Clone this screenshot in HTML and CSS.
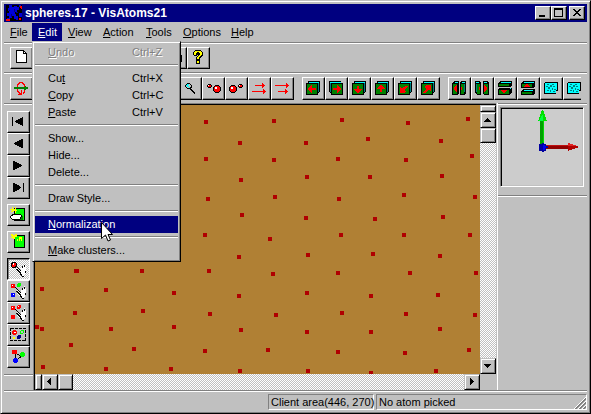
FILE: index.html
```html
<!DOCTYPE html>
<html lang="en">
<head>
<meta charset="utf-8">
<title>spheres.17 - VisAtoms21</title>
<link rel="stylesheet" href="styles.css">
</head>
<body>
<svg class="defs" aria-hidden="true">
  <defs>
    <g id="cube">
      <path d="M2 0h12v11h-1v1h-1V2H2z" fill="#000"/>
      <path d="M3 1h10v1H2z" fill="#0ff"/>
      <path d="M12 2h1v9h-1z" fill="#008080"/>
      <path d="M0 2h12v12H0z" fill="#000"/>
      <path d="M1 3h10v10H1z" fill="#008000"/>
    </g>
    <g id="hand">
      <path d="M7 6l4 4V7h1V5h2V3h1v2h1v6l-2 4h-3l-4-5z" fill="#fff"/>
      <path d="M5 4h1v1h1v1h1v1h1v1h1v1h1v1h-1V9H9V8H8V7H7V6H6V5H5zM6 8h2v1h1v1h1v1h1v2h1v2h-1v-1h-1v-2H9v-1H8v-1H7V9H6zM12 5h1v2h-1zM14 4h1v2h-1zM15 10h1v2h-1zM12 15h2v1h-2z" fill="#000"/>
    </g>
    <g id="bluebox">
      <path d="M2 1h12v9h-2v3H0V2z" fill="#000"/>
      <path d="M1 2h11v10H1zM13 2h-1v7h1z" fill="#0ff"/>
      <path d="M3 3h2v1H3zM8 3h2v1H8zM6 4h2v2H6zM2 5h2v1H2zM9 5h2v1H9zM4 6h2v2H4zM8 7h1v2H8zM10 8h2v1h-2zM3 9h2v1H3zM6 9h1v2H6zM9 10h2v1H9z" fill="#008080"/>
    </g>
  </defs>
</svg>
<div class="window">
  <header class="titlebar">
    <svg class="app-icon" width="16" height="16" aria-hidden="true">
      <path d="M0 0h16v16H0z" fill="#000"/>
      <path d="M3 0h3v2h2V1h3v1h2v3h-2v2H9v2h1v2h2v3H8v-3H6v2H3v-2H1V8h2V6H2V3h1zM13 0h2v2h-2zM13 8h3v4h-3zM1 13h3v2H1zM10 13h2v2h-2z" fill="#0000d8"/>
      <path d="M3 5h1v1H3zM8 4h1v3H8zM5 9h1v3H5zM10 7h2v1h-2z" fill="#000080"/>
      <path d="M14 1h2v3h-1V3h-1zM0 14h4v2H0zM13 13h2v2h-2z" fill="#f00"/>
    </svg>
    <h1>spheres.17 - VisAtoms21</h1>
    <div class="title-buttons">
      <button type="button" class="raised" aria-label="Minimize"><svg width="14" height="12"><path d="M3 8h6v2H3z"/></svg></button>
      <button type="button" class="raised" aria-label="Maximize"><svg width="14" height="12"><path d="M2 1h9v9H2zM3 3v6h7V3z" fill-rule="evenodd"/></svg></button>
      <button type="button" class="raised close" aria-label="Close"><svg width="14" height="12"><path d="M3 2h2v1h1v1h2V3h1V2h2v1h-1v1H9v1H8v1h1v1h1v1h1v1H9V8H8V7H6v1H5v1H3V8h1V7h1V6h1V5H5V4H4V3H3z"/></svg></button>
    </div>
  </header>

  <nav class="menubar">
    <button type="button"><u>F</u>ile</button>
    <div class="menu-holder">
      <button type="button" class="open" aria-expanded="true"><u>E</u>dit</button>
      <div class="menu" role="menu">
        <button type="button" role="menuitem" disabled><span><u>U</u>ndo</span><span>Ctrl+Z</span></button>
        <hr>
        <button type="button" role="menuitem"><span>Cu<u>t</u></span><span>Ctrl+X</span></button>
        <button type="button" role="menuitem"><span><u>C</u>opy</span><span>Ctrl+C</span></button>
        <button type="button" role="menuitem"><span><u>P</u>aste</span><span>Ctrl+V</span></button>
        <hr>
        <button type="button" role="menuitem">Show...</button>
        <button type="button" role="menuitem">Hide...</button>
        <button type="button" role="menuitem">Delete...</button>
        <hr>
        <button type="button" role="menuitem">Draw Style...</button>
        <hr>
        <button type="button" role="menuitem" class="selected"><span><u>N</u>ormalization</span>
          <svg class="cursor" width="12" height="20" aria-hidden="true"><path d="M.5 .5v16l4-3.500l2.500 6l2.500-1l-2.500-5.500h4.500z" fill="#fff" stroke="#000"/></svg>
        </button>
        <hr>
        <button type="button" role="menuitem"><span><u>M</u>ake clusters...</span></button>
      </div>
    </div>
    <button type="button"><u>V</u>iew</button>
    <button type="button"><u>A</u>ction</button>
    <button type="button"><u>T</u>ools</button>
    <button type="button"><u>O</u>ptions</button>
    <button type="button"><u>H</u>elp</button>
  </nav>

  <div class="toolbar rule file-tools">
    <div class="group">
      <button type="button" class="tool" aria-label="New"><svg width="16" height="16"><path d="M3 1h8v1h1v1h1v1h1v10H3z"/><path d="M4 2h6v3h3v8H4zM11 3h1v1h-1z" fill="#fff"/></svg></button>
      <button type="button" class="tool" aria-label="Open"></button>
      <button type="button" class="tool" aria-label="Save"></button>
    </div>
    <div class="group">
      <button type="button" class="tool" aria-label="Cut"></button>
      <button type="button" class="tool" aria-label="Copy"></button>
      <button type="button" class="tool" aria-label="Paste"></button>
    </div>
    <div class="group">
      <button type="button" class="tool" aria-label="Print"><svg width="16" height="16"><path d="M2 6h11V5h1v1h1v7h-1v1H2z"/><path d="M4 8h8v3H4zM13 7h1v1h-1zM13 10h1v1h-1z" fill="#c0c0c0"/></svg></button>
      <button type="button" class="tool" aria-label="Help"><svg width="16" height="16"><path d="M5 1h6v1h1v1h1v4h-1v1h-1v1h-1v2H6V8h1V7h1V6H7v1H4V6H3V3h1V2h1zM6 11h4v4H6z"/><path d="M5 2h6v1h1v3h-1v1h-1v1H9v2H7V8h1V7h1V6h1V4H9V3H7v1H6v2H4V3h1zM7 12h2v2H7z" fill="#ff0"/></svg></button>
    </div>
  </div>

  <div class="toolbar rule view-tools">
    <div class="group">
      <button type="button" class="tool" aria-label="Rotate"><svg width="16" height="16"><path d="M0 6h10V4h1v1h1v1h2v2h-2v1h-1v1h-1V8H0z" fill="#008000"/><path d="M5 1h4v1h1v1h1v3h-1V4H9V3H8V2H6v1H5v1H4v2H3V3h1V2h1zM3 8h1v2h1v1h1v1h1V9h1v5H4v-1h1v-1H4v-1H3zM10 9h1v3h-1v1H9v-2h1z" fill="#f00"/></svg></button>
      <button type="button" class="tool" aria-label="Rotate vertical"></button>
      <button type="button" class="tool" aria-label="Spin"></button>
      <button type="button" class="tool" aria-label="Move"></button>
      <button type="button" class="tool" aria-label="Move up"></button>
      <button type="button" class="tool" aria-label="Move down"></button>
      <button type="button" class="tool" aria-label="Fit"></button>
    </div>
    <div class="group">
      <button type="button" class="tool" aria-label="Zoom"><svg width="16" height="16"><path d="M4 2h3v1h1v1h1v3H8v1h1v1h1v1h1v1h1v2h-1v-1h-1v-1H9v-1H8V9H7V8H4V7H3V6H2V4h1V3h1zM4 3v1H3v2h1v1h3V6h1V4H7V3z"/><path d="M4 3h2v1H5v1h1v1H4V5H3V4h1zM6 6h1v1H6z" fill="#0ff"/></svg></button>
      <button type="button" class="tool" aria-label="Bring closer"><svg width="16" height="16"><path d="M2 3h3v1h1v2H5v1H2V6H1V4h1zM9 4h4v1h1v1h1v4h-1v1h-1v1H9v-1H8v-1H7V6h1V5h1z"/><path d="M2 4h3v2H2zM9 5h4v1h1v4h-1v1H9v-1H8V6h1z" fill="#f00"/><path d="M2 4h1v1H2zM9 6h2v2H9z" fill="#fff"/></svg></button>
      <button type="button" class="tool" aria-label="Push away"><svg width="16" height="16"><path d="M10 3h3v1h1v2h-1v1h-3V6H9V4h1zM2 4h4v1h1v1h1v4H7v1H6v1H2v-1H1v-1H0V6h1V5h1z"/><path d="M10 4h3v2h-3zM2 5h4v1h1v4H6v1H2v-1H1V6h1z" fill="#f00"/><path d="M10 4h1v1h-1zM2 6h2v2H2z" fill="#fff"/></svg></button>
      <button type="button" class="tool" aria-label="Slower"><svg width="16" height="16"><path d="M3 4h7V2h1v1h1v1h1v1h-1v1h-1v1h-1V5H3zM0 10h11V8h1v1h1v1h1v1h-1v1h-1v1h-1v-2H0z" fill="#f00"/></svg></button>
      <button type="button" class="tool" aria-label="Faster"><svg width="16" height="16"><path d="M0 4h11V2h1v1h1v1h1v1h-1v1h-1v1h-1V5H0zM3 10h7V8h1v1h1v1h1v1h-1v1h-1v1h-1v-2H3z" fill="#f00"/></svg></button>
    </div>
    <div class="group">
      <button type="button" class="tool" aria-label="View left"><svg width="14" height="14"><use href="#cube"/><path d="M2 7h1V6h1V5h1V4h1v3h4v2H6v3H5v-1H4v-1H3V9H2z" fill="#f00"/></svg></button>
      <button type="button" class="tool" aria-label="View right"><svg width="14" height="14"><use href="#cube" transform="matrix(-1 0 0 1 14 0)"/><path d="M12 7h-1V6h-1V5H9V4H8v3H4v2h4v3h1v-1h1v-1h1V9h1z" fill="#f00"/></svg></button>
      <button type="button" class="tool" aria-label="View down"><svg width="14" height="14"><use href="#cube"/><path d="M5 12v-1H4v-1H3V9H2V8h3V5h2v3h3v1H9v1H8v1H7v1z" fill="#f00"/></svg></button>
      <button type="button" class="tool" aria-label="View up"><svg width="14" height="14"><use href="#cube"/><path d="M5 4v1H4v1H3v1H2v1h3v3h2V8h3V7H9V6H8V5H7V4z" fill="#f00"/></svg></button>
      <button type="button" class="tool" aria-label="View front"><svg width="14" height="14"><use href="#cube"/><path d="M2 12V6h1v1h2V6h2V5h3v1H9v1H8v1H7v2h1v1H7v1z" fill="#f00"/></svg></button>
      <button type="button" class="tool" aria-label="View back"><svg width="14" height="14"><use href="#cube"/><path d="M10 4v6H9V9H7v1H6v1H5v1H2v-1h1v-1h1V9h1V7H4V5h1V4z" fill="#f00"/></svg></button>
    </div>
    <div class="group">
      <button type="button" class="tool" aria-label="Cut left"><svg width="14" height="14"><path d="M2 0h5v12l-2 2H0V2zM9 0h5v12l-2 2H8V2z"/><path d="M1 3h4v10H1zM9 3h3v10H9z" fill="#008000"/><path d="M3 1h3v1H3zM10 1h3v1h-3z" fill="#0ff"/><path d="M12 3h1v8h-1z" fill="#008080"/><path d="M5 4v7H4v-1H3V9H2V6h1V5h1V4zM9 6h1v3H9z" fill="#f00"/></svg></button>
      <button type="button" class="tool" aria-label="Cut right"><svg width="14" height="14"><path d="M0 0h5l1 2v12H2l-2-2zM8 0h4l2 2v12H9l-1-2z"/><path d="M2 3h3v10H2zM9 3h4v10H9z" fill="#008000"/><path d="M1 1h3v1H1zM9 1h3v1H9z" fill="#0ff"/><path d="M1 3h1v8H1z" fill="#008080"/><path d="M9 4v7h1v-1h1V9h1V6h-1V5h-1V4zM4 6h1v3H4z" fill="#f00"/></svg></button>
      <button type="button" class="tool" aria-label="Cut bottom"><svg width="14" height="14"><path d="M2 0h12v4l-2 2H0V2zM2 7h12v4l-2 3H0V8z"/><path d="M3 1h10v1H3zM12 7h1v1h-1z" fill="#0ff"/><path d="M1 3h10v2H1zM1 9h10v4H1z" fill="#008000"/><path d="M3 9h6v1H8v1H7v1H5v-1H4v-1H3z" fill="#f00"/></svg></button>
      <button type="button" class="tool" aria-label="Cut top"><svg width="14" height="14"><path d="M2 0h12v5l-2 2H0V2zM2 8h12v4l-2 2H0v-4z"/><path d="M3 1h10v1H3zM3 9h9v1H3z" fill="#0ff"/><path d="M1 3h10v3H1zM1 11h10v2H1z" fill="#008000"/><path d="M5 3h2v1h1v1h1v1H3V5h1V4h1z" fill="#f00"/></svg></button>
      <button type="button" class="tool" aria-label="Fill cell"><svg width="14" height="14"><use href="#bluebox"/></svg></button>
      <button type="button" class="tool" aria-label="Empty cell"><svg width="14" height="14"><use href="#bluebox"/></svg></button>
    </div>
  </div>

  <main class="workspace">
    <aside class="sidebar rule">
      <div class="stack">
        <button type="button" class="tool" aria-label="First frame"><svg width="16" height="16"><path d="M2 3h1v9H2zM5 7h1V6h2V5h2V4h2V3h1v9h-1v-1h-2v-1H8V9H6V8H5z"/></svg></button>
        <button type="button" class="tool" aria-label="Previous frame"><svg width="16" height="16"><path d="M4 7h1V6h2V5h2V4h2V3h2v9h-2v-1H9v-1H7V9H5V8H4z"/></svg></button>
        <button type="button" class="tool" aria-label="Next frame"><svg width="16" height="16"><path d="M12 7h-1V6H9V5H7V4H5V3H3v9h2v-1h2v-1h2V9h2V8h1z"/></svg></button>
        <button type="button" class="tool" aria-label="Last frame"><svg width="16" height="16"><path d="M11 7h-1V6H9V5H7V4H5V3H3v9h2v-1h2v-1h2V9h1V8h1zM13 3h1v9h-1z"/></svg></button>
      </div>
      <div class="stack">
        <button type="button" class="tool" aria-label="Record"><svg width="16" height="16"><path d="M4 1h11v13H4z"/><path d="M5 2h9v11H5z" fill="#0f0"/><path d="M9 9h4v4H9z" fill="#008000"/><path d="M2 7h9v1h1v2h-1v2h-1v1H2v-1H1v-1H0V9h1V8h1z"/><path d="M3 8h8v2h-1v2H2v-1H1V9h2z" fill="#fff"/><path d="M2 0h1v2h2V0h1v3h1v1H6v2H5V4H3v1H1V4h1V3H0V2h2z" fill="#ff0"/></svg></button>
      </div>
      <div class="stack">
        <button type="button" class="tool" aria-label="New frame"><svg width="16" height="16"><path d="M4 1h11v13H4z"/><path d="M5 2h9v11H5z" fill="#0f0"/><path d="M1 0h2v1h2V0h2v3H5v2H3V4H1V3h1V2H1zM7 5h1v2H7zM9 3h3v4h-1V5h-1v2H9z" fill="#ff0"/></svg></button>
      </div>
      <div class="stack">
        <button type="button" class="tool pressed" aria-label="Pick atom"><svg width="16" height="16"><use href="#hand"/><circle cx="4" cy="4" r="2.500" fill="#f00" stroke="#000"/><path d="M3 2h1v2H3z" fill="#fff"/></svg></button>
        <button type="button" class="tool" aria-label="Pick by kind"><svg width="16" height="16"><use href="#hand"/><circle cx="3" cy="3" r="2.500" fill="#f00"/><circle cx="9" cy="2" r="2" fill="#0f0"/><circle cx="3" cy="12" r="2.500" fill="#00f"/><path d="M2 2h1v1H2zM3 11h1v1H3z" fill="#fff"/></svg></button>
        <button type="button" class="tool" aria-label="Pick by cluster"><svg width="16" height="16"><use href="#hand"/><circle cx="3" cy="3" r="2.500" fill="#f00"/><circle cx="9" cy="2" r="2" fill="#f00"/><circle cx="3" cy="12" r="2.500" fill="#f00"/><path d="M2 2h1v1H2zM8 1h1v1H8z" fill="#fff"/></svg></button>
        <button type="button" class="tool" aria-label="Pick by box"><svg width="16" height="16"><path d="M.5 1.500h15v12H.5z" fill="none" stroke="#000" stroke-dasharray="3 1"/><circle cx="4.500" cy="5.500" r="2.500" fill="#f00"/><circle cx="12" cy="5" r="1.500" fill="none" stroke="#0f0"/><circle cx="9" cy="10" r="2" fill="#000080"/><path d="M4 5h2v1H4z" fill="#fff"/><path d="M3 10h2v2H3z" fill="#ff0"/></svg></button>
        <button type="button" class="tool" aria-label="Bonds"><svg width="16" height="16"><path d="M4 4l8 3l-7 5V4" fill="none" stroke="#000"/><circle cx="4.500" cy="3" r="2.500" fill="#f00"/><circle cx="12.500" cy="5.500" r="2.500" fill="#0f0"/><circle cx="5.500" cy="11.500" r="2.500" fill="#00f"/></svg></button>
      </div>
      <div class="sidebar-foot rule"></div>
    </aside>

    <section class="view" aria-label="Atoms">
      <svg class="atoms" role="img" aria-label="Atom positions">
        <g transform="translate(-35 -103)">
          <path d="M204 120h4M272 119h4M340 118h4M238 141h4M304 141h4M366 137h4M204 157h4M272 158h4M336 157h4M239 178h4M305 175h4M368 175h4M206 197h4M273 195h4M337 197h4M240 213h4M304 216h4M373 217h4M203 233h4M268 237h4M339 233h4M237 255h4M306 253h4M371 252h4
          M207 269h4M271 272h4M336 271h4M237 294h4M305 291h4M369 294h4M208 312h4M274 313h4M340 311h4M239 328h4M305 330h4M369 330h4M203 349h4M266 348h4M336 350h4M238 369h4M306 369h4M369 371h4
          M74 269h5M140 269h4M40 287h4M104 288h4M172 291h4M73 311h4M141 309h4M35 325h4M40 327h4M109 327h4M172 325h4M69 343h4M132 347h4M41 365h4M104 367h4M169 367h4
          M406 121h4M466 117h4M439 139h4M404 158h4M470 154h4M440 174h4M402 193h4M473 195h4M441 215h4M402 233h4M468 233h4M438 254h4M408 271h4M474 271h4M436 293h4M404 312h4M473 313h4M438 327h4M403 351h4M467 348h4M434 369h4"/>
        </g>
      </svg>
      <div class="scroll vertical">
        <div class="splitter bevel"></div>
        <button type="button" class="bevel" aria-label="Scroll up"><svg width="14" height="14"><path d="M6 5h1v1h1v1h1v1h1v1H3V8h1V7h1V6h1z"/></svg></button>
        <div class="thumb bevel"></div>
        <div class="track"></div>
        <button type="button" class="bevel" aria-label="Scroll down"><svg width="14" height="14"><path d="M3 5h7v1H9v1H8v1H7v1H6V8H5V7H4V6H3z"/></svg></button>
      </div>
      <div class="scroll horizontal">
        <div class="splitter bevel"></div>
        <button type="button" class="bevel" aria-label="Scroll left"><svg width="14" height="14"><path d="M8 3v7H7V9H6V8H5V7H4V6h1V5h1V4h1V3z"/></svg></button>
        <div class="thumb bevel"></div>
        <div class="track"></div>
        <button type="button" class="bevel" aria-label="Scroll right"><svg width="14" height="14"><path d="M5 3h1v1h1v1h1v1h1v1H8v1H7v1H6v1H5z"/></svg></button>
      </div>
    </section>

    <aside class="panel">
      <div class="axes-section rule">
        <div class="axes">
          <svg width="80" height="76" role="img" aria-label="Axes">
            <path d="M38 12h4v24h-4z" fill="#00a000"/><path d="M41 12h1v24h-1z" fill="#00d800"/>
            <path d="M40 1h1l4 11h-9z" fill="#00e000"/><path d="M40 6h1v6h-4z" fill="#0f4"/>
            <path d="M44 36h23v4H44z" fill="#900000"/><path d="M44 36h23v1H44z" fill="#c01010"/>
            <path d="M66 34l11 4l-11 4z" fill="#b00000"/><path d="M66 34l9 3h-9z" fill="#e02020"/>
            <path d="M38 35h2v-1h2v1h2v2h2v2h-2v3h-2v1h-2v-1h-3v-7z" fill="#0000a0"/><path d="M41 36h2v1h1v2h-1v2h-2z" fill="#0000f0"/>
          </svg>
        </div>
      </div>
      <div class="rule"></div>
    </aside>
  </main>

  <footer class="statusbar rule">
    <div class="pane position">Client area(446, 270)</div>
    <div class="pane message">No atom picked</div>
    <svg class="grip" width="12" height="12" aria-hidden="true"><path d="M0 12L12 0M4 12l8-8M8 12l4-4" stroke="#fff" fill="none"/><path d="M1 12L12 1M2 12L12 2M5 12l7-7M6 12l6-6M9 12l3-3M10 12l2-2" stroke="#808080" fill="none"/></svg>
  </footer>
</div>
</body>
</html>
```
FILE: styles.css
```css
:root {
  --face: #c0c0c0;
  --shade: #808080;
  --light: #fff;
  --navy: #000080;
}

* {
  box-sizing: border-box;
}

body {
  margin: 0;
  font: 11px/16px "Liberation Sans", Arial, sans-serif;
  color: #000;
  background: var(--face);
}

svg {
  display: block;
  flex: none;
  shape-rendering: crispEdges;
}

button {
  margin: 0;
  padding: 0;
  border: 0;
  border-radius: 0;
  font: inherit;
  color: inherit;
  background: var(--face);
}

u {
  text-decoration-thickness: 1px;
  text-underline-offset: 1px;
}

.defs {
  position: absolute;
  width: 0;
  height: 0;
}

.window {
  display: flex;
  flex-direction: column;
  min-height: 100vh;
  padding: 3px;
  background: var(--face);
  border: 1px solid;
  border-color: var(--face) #000 #000 var(--face);
  box-shadow: inset 1px 1px var(--light), inset -1px -1px var(--shade);
}

/* Etched line along the top edge of a bar */
.rule {
  border-top: 1px solid var(--shade);
  box-shadow: inset 0 1px var(--light);
}

.raised,
.tool {
  display: flex;
  align-items: flex-start;
  border: 1px solid;
  border-color: var(--light) #000 #000 var(--light);
  box-shadow: inset -1px -1px var(--shade);
}

.bevel {
  border: 1px solid;
  border-color: var(--face) #000 #000 var(--face);
  box-shadow: inset 1px 1px var(--light), inset -1px -1px var(--shade);
  background: var(--face);
}

/* Title bar */
.titlebar {
  display: flex;
  align-items: center;
  height: 18px;
  padding: 0 2px;
  color: #fff;
  background: var(--navy);
}

.titlebar h1 {
  flex: 1;
  margin: 0 0 0 3px;
  font-size: 12px;
  line-height: 18px;
}

.title-buttons {
  display: flex;
}

.title-buttons button {
  width: 16px;
  height: 14px;
}

.title-buttons .close {
  margin-left: 2px;
}

/* Menu bar */
.menubar {
  display: grid;
  grid-template-columns: 28px 30px 35px 43px 37px 48px 36px;
  height: 20px;
  padding: 1px 0;
}

.menubar > button,
.menu-holder > button {
  height: 18px;
  padding-left: 6px;
  text-align: left;
  white-space: nowrap;
}

.menu-holder {
  position: relative;
}

.menu-holder > .open {
  width: 100%;
  color: #fff;
  background: var(--navy);
}

.menu {
  position: absolute;
  z-index: 2;
  top: 18px;
  left: 0;
  width: 149px;
  padding: 2px;
  background: var(--face);
  border: 1px solid;
  border-color: var(--face) #000 #000 var(--face);
  box-shadow: inset 1px 1px var(--light), inset -1px -1px var(--shade);
}

.menu button {
  position: relative;
  display: grid;
  grid-template-columns: 84px 1fr;
  width: 100%;
  height: 17px;
  padding-left: 13px;
  line-height: 17px;
  text-align: left;
  white-space: nowrap;
}

.menu button:disabled {
  color: var(--shade);
  text-shadow: 1px 1px var(--light);
}

.menu .selected {
  color: #fff;
  background: var(--navy);
}

.menu hr {
  height: 2px;
  margin: 3px 0 4px;
  border: 0;
  border-top: 1px solid var(--shade);
  border-bottom: 1px solid var(--light);
}

.cursor {
  position: absolute;
  z-index: 3;
  top: 6px;
  left: 66px;
  shape-rendering: auto;
}

/* Toolbars */
.toolbar {
  display: flex;
  gap: 8px;
  padding: 4px 6px 3px;
  overflow: hidden;
}

.group {
  display: flex;
  flex: none;
}

.tool {
  width: 23px;
  height: 22px;
  padding: 2px;
}

.file-tools .tool {
  padding-top: 1px;
}

.view-tools .tool {
  flex: none;
  height: 23px;
  padding: 3px;
}

.view-tools .group:last-child {
  flex: 0 1 auto;
  min-width: 0;
  overflow: hidden;
}

/* Work area */
.workspace {
  display: grid;
  flex: 1;
  grid-template-columns: 29px minmax(0, 1fr) 91px;
}

.sidebar {
  display: flex;
  flex-direction: column;
  gap: 5px;
  padding-top: 7px;
}

.stack {
  padding-left: 3px;
}

.sidebar-foot {
  height: 16px;
  margin-top: auto;
}

.pressed {
  border-color: #000 var(--light) var(--light) #000;
  box-shadow: inset 1px 1px var(--shade);
}

.pressed,
.track {
  background: repeating-conic-gradient(var(--light) 0 25%, var(--face) 0 50%) 0 0 / 2px 2px;
}

.view {
  display: grid;
  grid-template-rows: minmax(0, 1fr) 16px;
  grid-template-columns: minmax(0, 1fr) 16px;
  padding: 1px 0 0 1px;
  border-top: 1px solid var(--shade);
  border-left: 1px solid var(--shade);
  box-shadow: inset 1px 1px #000;
}

.atoms {
  width: 100%;
  height: 100%;
  background: #b08034;
  stroke: #b00000;
  stroke-width: 4px;
}

.scroll {
  display: flex;
  min-width: 0;
}

.vertical {
  flex-direction: column;
}

.scroll button {
  width: 16px;
  height: 16px;
}

.track {
  flex: 1;
}

.vertical .splitter {
  height: 7px;
}

.horizontal .splitter {
  width: 7px;
}

.vertical .thumb {
  height: 15px;
}

.horizontal .thumb {
  width: 15px;
}

.panel {
  display: flex;
  flex-direction: column;
  margin-left: 1px;
  border-left: 1px solid var(--light);
}

.axes-section {
  padding: 3px 3px 8px 2px;
}

.axes {
  height: 80px;
  overflow: hidden;
  padding: 1px;
  background: #ccc;
  border: 1px solid;
  border-color: var(--shade) var(--light) var(--light) var(--shade);
  box-shadow: inset 1px 1px #000, inset -1px -1px var(--face);
}

.panel .rule:last-child {
  flex: 1;
}

/* Status bar */
.statusbar {
  position: relative;
  display: flex;
  gap: 2px;
  justify-content: flex-end;
  padding-top: 3px;
}

.pane {
  height: 16px;
  padding-left: 2px;
  line-height: 15px;
  white-space: nowrap;
  border: 1px solid;
  border-color: var(--shade) var(--light) var(--light) var(--shade);
}

.position {
  width: 106px;
}

.message {
  width: 211px;
}

.grip {
  position: absolute;
  right: 1px;
  bottom: 1px;
}
```
